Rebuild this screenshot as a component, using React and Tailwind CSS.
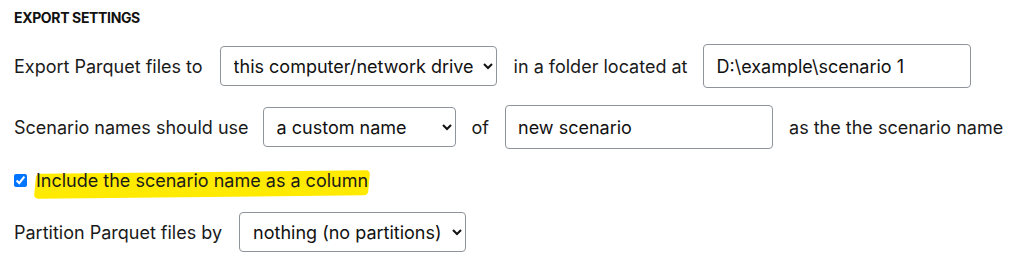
import React, { useState } from 'react';

const font = { fontFamily: 'Inter, "Noto Sans", sans-serif' };

function Select({ value, options, className }) {
  const [v, setV] = useState(value);
  return (
    <select
      value={v}
      onChange={(e) => setV(e.target.value)}
      className={`h-10 shrink-0 rounded border border-[#8f949b] bg-white pl-[9px] pr-1 text-[18px] text-[#111] ${className}`}
      style={font}
    >
      {options.map((o) => (
        <option key={o}>{o}</option>
      ))}
    </select>
  );
}

function TextInput({ value, className }) {
  const [v, setV] = useState(value);
  return (
    <input
      value={v}
      onChange={(e) => setV(e.target.value)}
      className={`h-11 shrink-0 rounded border border-[#8f949b] bg-white px-3 text-[18px] text-[#111] outline-none ${className}`}
      style={font}
    />
  );
}

export default function App() {
  const [includeName, setIncludeName] = useState(true);

  return (
    <div className="whitespace-nowrap bg-white text-[18px] text-[#1a1a1a] px-[14px] pt-[7px]" style={font}>
      <h2 className="text-[14px] font-bold tracking-tight text-[#111]">EXPORT SETTINGS</h2>

      <div className="mt-[16px] flex items-center">
        <span>Export Parquet files to</span>
        <Select
          className="ml-[17px] w-[277px]"
          value="this computer/network drive"
          options={['this computer/network drive', 'a cloud storage bucket']}
        />
        <span className="ml-[17px]">in a folder located at</span>
        <TextInput className="ml-[16px] w-[268px]" value="D:\example\scenario 1" />
      </div>

      <div className="mt-[17px] flex items-center">
        <span>Scenario names should use</span>
        <Select
          className="ml-[14px] w-[193px]"
          value="a custom name"
          options={['a custom name', 'the scenario file name']}
        />
        <span className="ml-[16px]">of</span>
        <TextInput className="ml-[16px] w-[268px]" value="new scenario" />
        <span className="ml-[16px]">as the the scenario name</span>
      </div>

      <label className="mt-[18px] flex items-center">
        <input
          type="checkbox"
          checked={includeName}
          onChange={(e) => setIncludeName(e.target.checked)}
          className="m-0 h-[13px] w-[13px]"
        />
        <span className="relative ml-[9px]">
          <span className="absolute -left-[1px] -right-[1px] top-[5px] bottom-[-3px] -skew-x-6 -rotate-[0.6deg] rounded-sm bg-[#ffea00]" />
          <span className="relative">Include the scenario name as a column</span>
        </span>
      </label>

      <div className="mt-[18px] flex items-center pb-[9px]">
        <span>Partition Parquet files by</span>
        <Select
          className="ml-[17px] w-[227px]"
          value="nothing (no partitions)"
          options={['nothing (no partitions)', 'scenario', 'year']}
        />
      </div>
    </div>
  );
}
